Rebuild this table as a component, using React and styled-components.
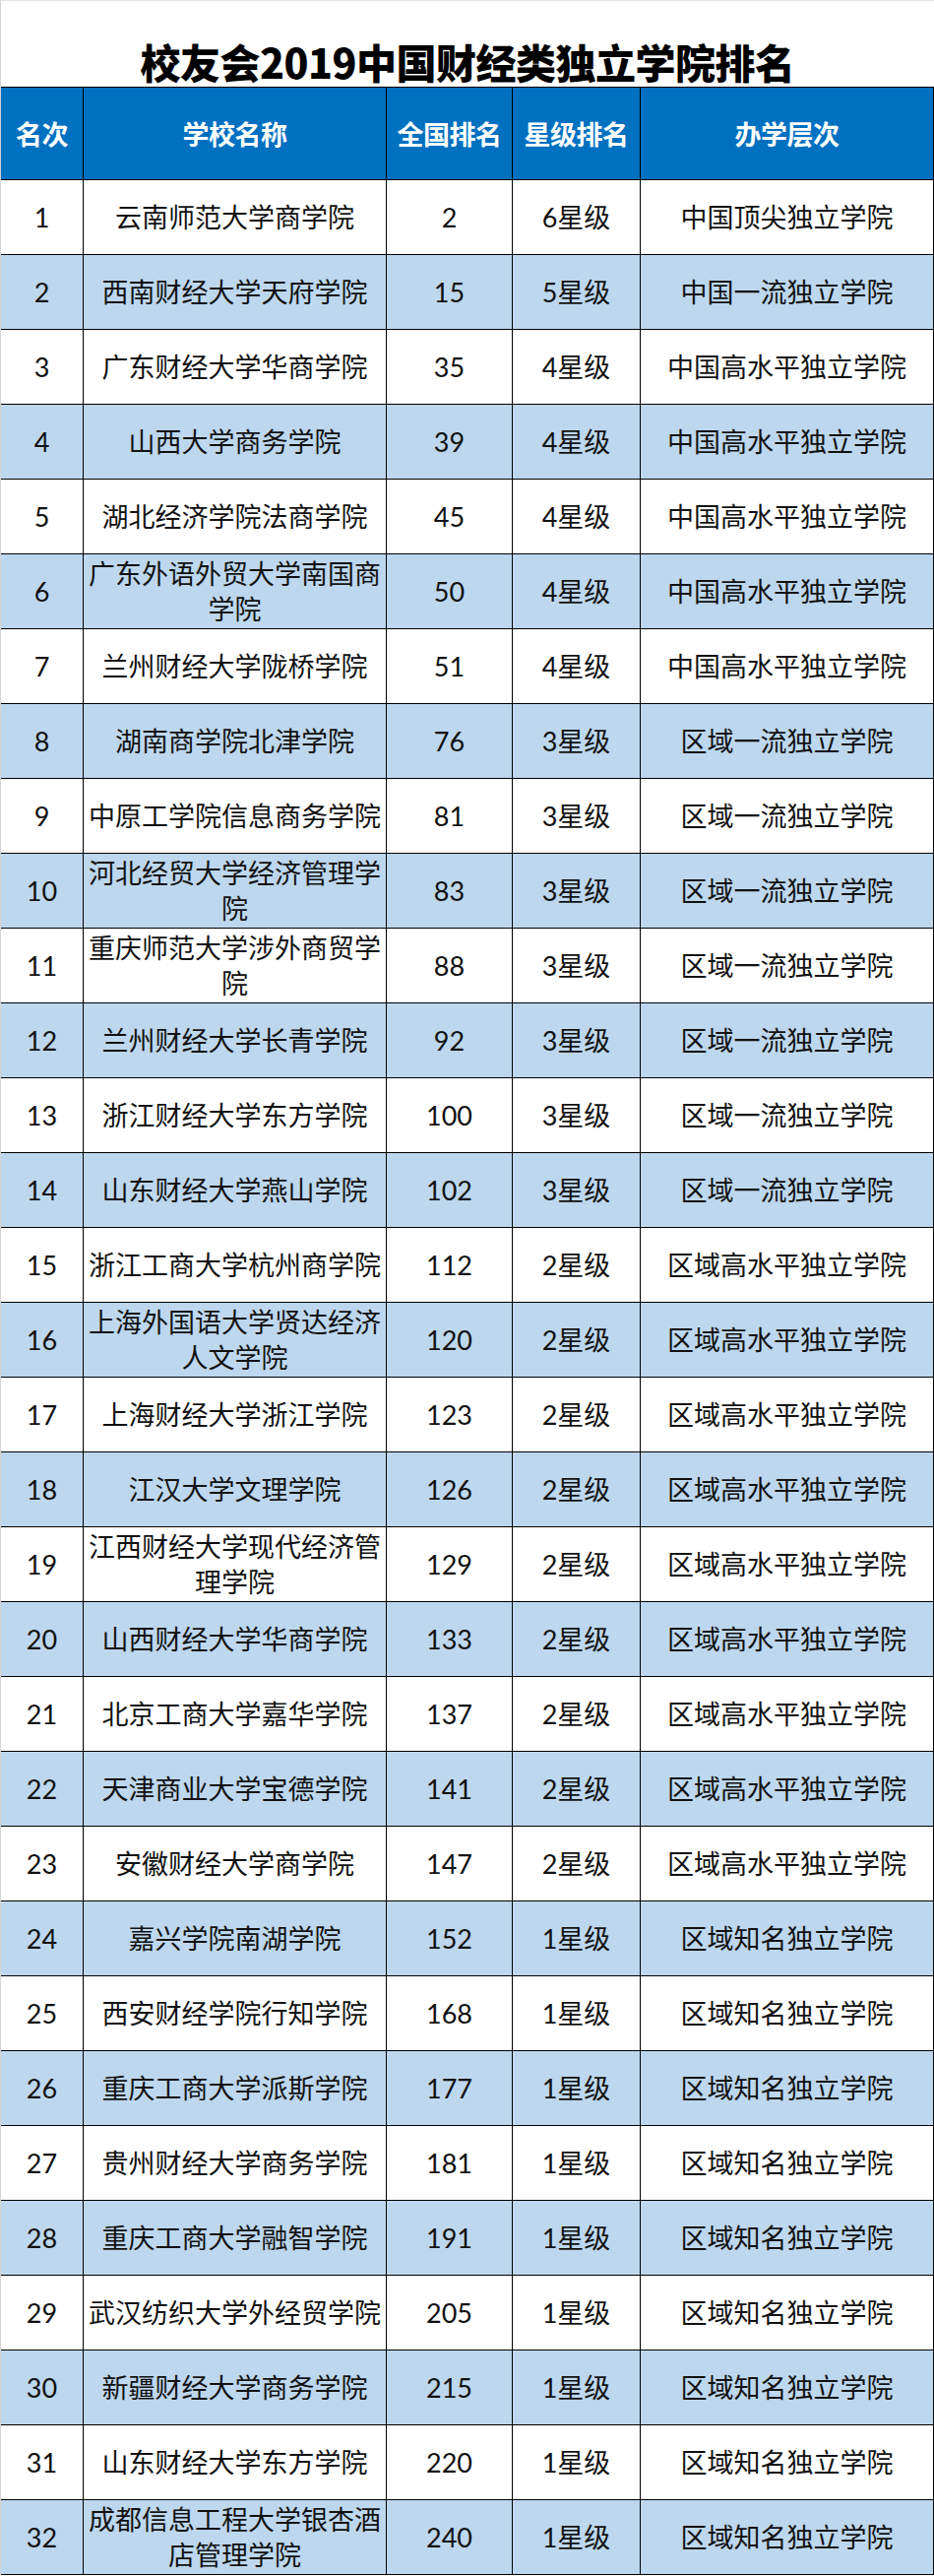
import React from "react"
import styled, { createGlobalStyle } from "styled-components"

const GlobalStyle = createGlobalStyle`
  html, body {
    margin: 0;
    padding: 0;
    background: #fff;
  }
  body {
    font-family: Lato, "Noto Sans CJK SC", sans-serif;
    color: #111;
  }
`

const COLS = "84px 308px 128px 130px 298px"

const Page = styled.div`
  width: 948px;
  border-left: 1px solid #d4d4d4;
  border-top: 1px solid #e2e2e2;
`

const Title = styled.h1`
  margin: 0;
  height: 87px;
  box-sizing: border-box;
  padding-top: 39px;
  font-family: "Noto Sans CJK SC", sans-serif;
  font-weight: 900;
  font-size: 41px;
  line-height: 44px;
  letter-spacing: -0.5px;
  text-align: center;
  color: #000;
`

const Row = styled.div`
  display: grid;
  grid-template-columns: ${COLS};
  height: ${({ $head }) => ($head ? "95px" : "76px")};
  background: ${({ $head, $alt }) =>
    $head ? "#0070c0" : $alt ? "#bdd7ee" : "#fff"};
  border-top: ${({ $head }) => ($head ? "1px solid #000" : "none")};
  box-sizing: border-box;
`

const Cell = styled.div`
  display: flex;
  align-items: center;
  justify-content: center;
  text-align: center;
  box-sizing: border-box;
  border-right: 1px solid #000;
  border-bottom: 1px solid #000;
  padding: 0 2px;
  font-size: 27px;
  line-height: 36px;
  white-space: pre;
  overflow: visible;
`

const HeadCell = styled(Cell)`
  font-family: "Noto Sans CJK SC", sans-serif;
  font-weight: 700;
  font-size: 27px;
  color: #fff;
  letter-spacing: -0.5px;
`

const rows = [
  ["云南师范大学商学院", 2, 6, "中国顶尖独立学院"],
  ["西南财经大学天府学院", 15, 5, "中国一流独立学院"],
  ["广东财经大学华商学院", 35, 4, "中国高水平独立学院"],
  ["山西大学商务学院", 39, 4, "中国高水平独立学院"],
  ["湖北经济学院法商学院", 45, 4, "中国高水平独立学院"],
  ["广东外语外贸大学南国商\n学院", 50, 4, "中国高水平独立学院"],
  ["兰州财经大学陇桥学院", 51, 4, "中国高水平独立学院"],
  ["湖南商学院北津学院", 76, 3, "区域一流独立学院"],
  ["中原工学院信息商务学院", 81, 3, "区域一流独立学院"],
  ["河北经贸大学经济管理学\n院", 83, 3, "区域一流独立学院"],
  ["重庆师范大学涉外商贸学\n院", 88, 3, "区域一流独立学院"],
  ["兰州财经大学长青学院", 92, 3, "区域一流独立学院"],
  ["浙江财经大学东方学院", 100, 3, "区域一流独立学院"],
  ["山东财经大学燕山学院", 102, 3, "区域一流独立学院"],
  ["浙江工商大学杭州商学院", 112, 2, "区域高水平独立学院"],
  ["上海外国语大学贤达经济\n人文学院", 120, 2, "区域高水平独立学院"],
  ["上海财经大学浙江学院", 123, 2, "区域高水平独立学院"],
  ["江汉大学文理学院", 126, 2, "区域高水平独立学院"],
  ["江西财经大学现代经济管\n理学院", 129, 2, "区域高水平独立学院"],
  ["山西财经大学华商学院", 133, 2, "区域高水平独立学院"],
  ["北京工商大学嘉华学院", 137, 2, "区域高水平独立学院"],
  ["天津商业大学宝德学院", 141, 2, "区域高水平独立学院"],
  ["安徽财经大学商学院", 147, 2, "区域高水平独立学院"],
  ["嘉兴学院南湖学院", 152, 1, "区域知名独立学院"],
  ["西安财经学院行知学院", 168, 1, "区域知名独立学院"],
  ["重庆工商大学派斯学院", 177, 1, "区域知名独立学院"],
  ["贵州财经大学商务学院", 181, 1, "区域知名独立学院"],
  ["重庆工商大学融智学院", 191, 1, "区域知名独立学院"],
  ["武汉纺织大学外经贸学院", 205, 1, "区域知名独立学院"],
  ["新疆财经大学商务学院", 215, 1, "区域知名独立学院"],
  ["山东财经大学东方学院", 220, 1, "区域知名独立学院"],
  ["成都信息工程大学银杏酒\n店管理学院", 240, 1, "区域知名独立学院"],
]

export default function App() {
  return (
    <>
      <GlobalStyle />
      <Page>
        <Title>校友会2019中国财经类独立学院排名</Title>
        <Row $head>
          <HeadCell>名次</HeadCell>
          <HeadCell>学校名称</HeadCell>
          <HeadCell>全国排名</HeadCell>
          <HeadCell>星级排名</HeadCell>
          <HeadCell>办学层次</HeadCell>
        </Row>
        {rows.map(([name, rank, star, level], i) => (
          <Row key={i} $alt={i % 2 === 1}>
            <Cell>{i + 1}</Cell>
            <Cell>{name}</Cell>
            <Cell>{rank}</Cell>
            <Cell>{star}星级</Cell>
            <Cell>{level}</Cell>
          </Row>
        ))}
      </Page>
    </>
  )
}
